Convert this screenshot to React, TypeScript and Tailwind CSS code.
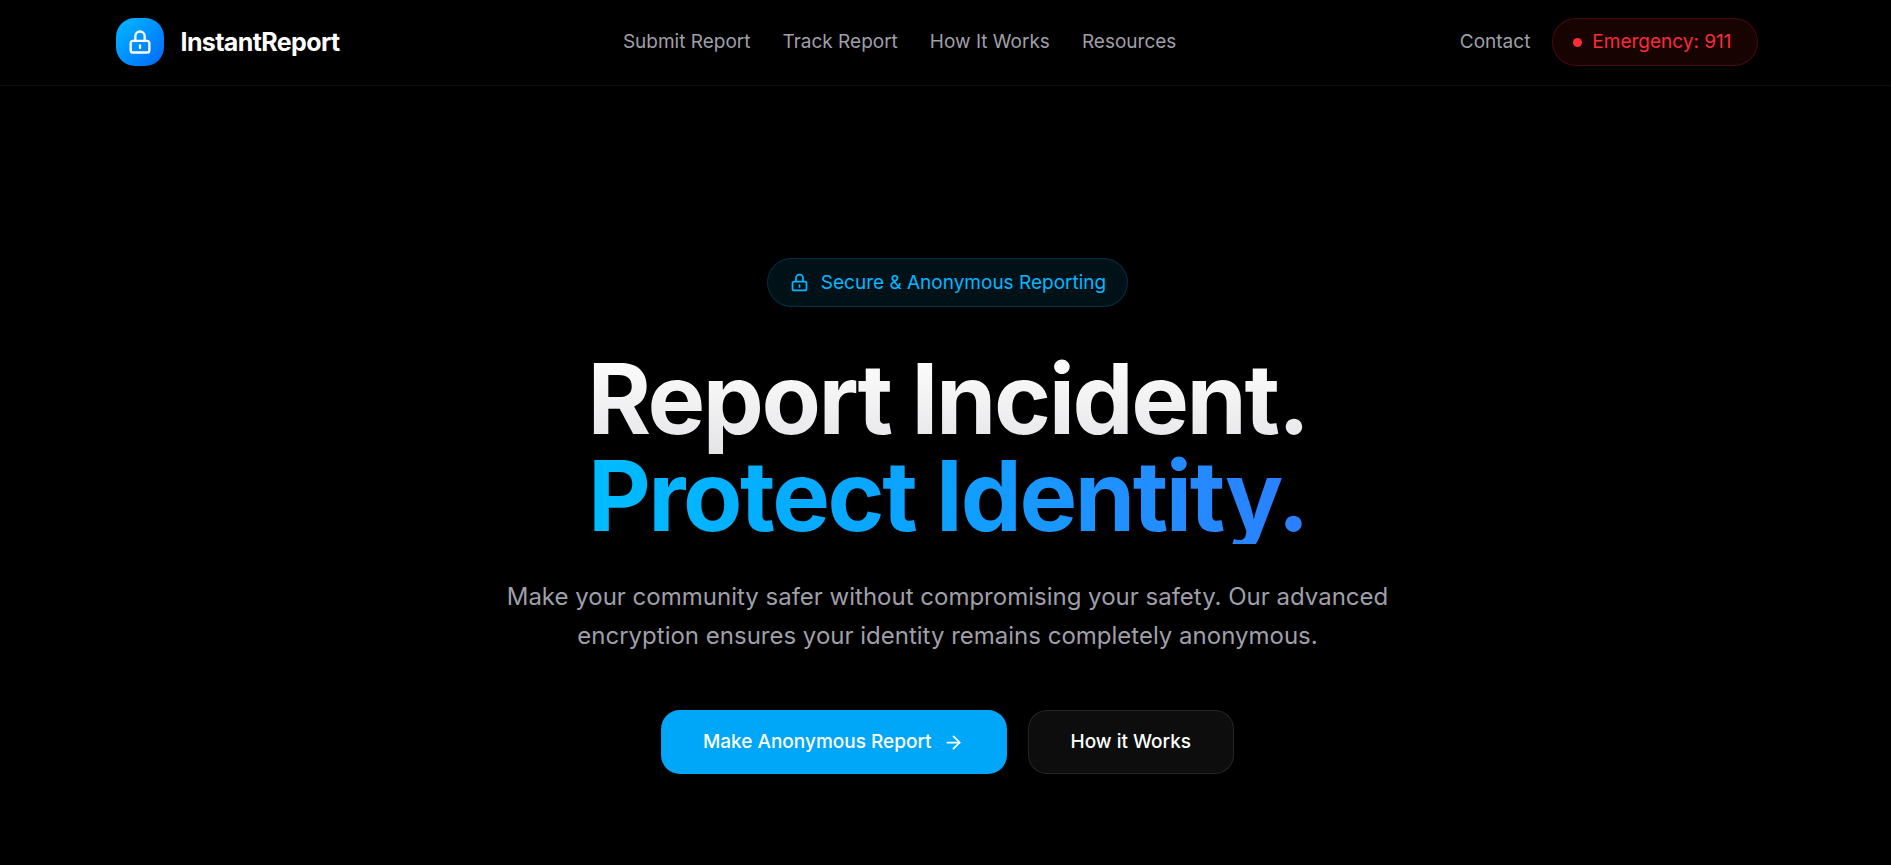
import { ArrowRight } from 'lucide-react';

const navLinks = [
  { label: 'Submit Report', href: '#submit' },
  { label: 'Track Report', href: '#track' },
  { label: 'How It Works', href: '#how' },
  { label: 'Resources', href: '#resources' },
];

function LockIcon({ className }: { className?: string }) {
  return (
    <svg className={className} viewBox="0 0 24 24" fill="none" stroke="currentColor" aria-hidden="true">
      <path
        strokeLinecap="round"
        strokeLinejoin="round"
        strokeWidth={2}
        d="M12 15v2m-6 4h12a2 2 0 002-2v-6a2 2 0 00-2-2H6a2 2 0 00-2 2v6a2 2 0 002 2zm10-10V7a4 4 0 00-8 0v4h8z"
      />
    </svg>
  );
}

function Navbar() {
  return (
    <header className="border-b border-white/5 pr-[18px]">
      <div className="mx-auto flex max-w-[1706px] items-center justify-between px-8 pt-[18px] pb-[19px]">
        <a href="#home" className="flex items-center gap-[17px]">
          <span className="flex h-12 w-12 items-center justify-center rounded-[19px] bg-gradient-to-br from-[#00b8ff] to-[#0066ff]">
            <LockIcon className="h-7 w-7 text-white" />
          </span>
          <span className="text-[25px] leading-8 font-bold tracking-tight text-white">InstantReport</span>
        </a>

        <nav className="flex items-center gap-8">
          {navLinks.map((link) => (
            <a key={link.href} href={link.href} className="text-[19px] leading-[30px] text-zinc-400 hover:text-white">
              {link.label}
            </a>
          ))}
        </nav>

        <div className="flex items-center gap-[22px]">
          <a href="#contact" className="text-[19px] leading-[30px] text-zinc-400 hover:text-white">
            Contact
          </a>
          <button className="flex h-12 items-center gap-[10px] rounded-full border border-red-500/20 bg-[#180303] pr-[25px] pl-5 text-[19px] leading-[30px] text-[#fb2c36]">
            <span className="h-[9px] w-[9px] rounded-full bg-[#fb2c36]" />
            Emergency: 911
          </button>
        </div>
      </div>
    </header>
  );
}

function Hero() {
  return (
    <main className="flex flex-col items-center pt-[172px] pl-1 text-center">
      <div className="flex h-[49px] items-center gap-[11px] rounded-full border border-sky-500/20 bg-sky-500/10 px-[21px] text-[19px] leading-7 text-[#00b8ff]">
        <LockIcon className="h-[21px] w-[21px]" />
        Secure &amp; Anonymous Reporting
      </div>

      <h1 className="mt-[43px] text-[97px] leading-none font-bold tracking-tight">
        <span className="block bg-gradient-to-b from-white to-zinc-200 bg-clip-text pb-2 text-transparent">
          Report Incident.
        </span>
        <span className="-mt-2 block bg-gradient-to-r from-[#00bcff] via-[#0da0ff] to-[#2b7fff] bg-clip-text text-transparent">
          Protect Identity.
        </span>
      </h1>

      <p className="mt-[33px] max-w-[900px] text-2xl leading-[39px] text-zinc-400">
        Make your community safer without compromising your safety. Our advanced encryption ensures your identity remains
        completely anonymous.
      </p>

      <div className="mt-[55px] flex gap-[21px]">
        <button className="flex h-16 items-center gap-[11px] rounded-[19px] bg-[#00a6f8] pr-[43px] pl-[42px] text-[19px] leading-7 font-medium text-white">
          Make Anonymous Report
          <ArrowRight className="h-[21px] w-[21px]" />
        </button>
        <button className="h-16 rounded-[19px] border border-white/10 bg-white/5 px-[42px] text-[19px] leading-7 font-medium text-white">
          How it Works
        </button>
      </div>
    </main>
  );
}

export default function App() {
  return (
    <div className="min-h-screen bg-black font-['Inter',sans-serif]">
      <Navbar />
      <Hero />
    </div>
  );
}
